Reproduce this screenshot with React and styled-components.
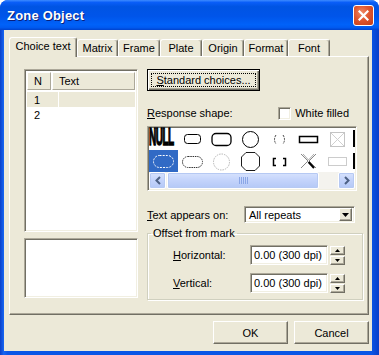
import React from "react"
import styled, { createGlobalStyle } from "styled-components"

const GlobalStyle = createGlobalStyle`
  html, body { margin: 0; padding: 0; background: #fff; }
  body {
    font-family: "Liberation Sans", Arial, sans-serif;
    font-size: 11px;
    color: #000;
  }
`

const Window = styled.div`
  width: 379px;
  height: 355px;
  display: flex;
  flex-direction: column;
  border-radius: 8px 8px 0 0;
  overflow: hidden;
  background: #0851e0;
`

const TitleBar = styled.div`
  height: 30px;
  flex: none;
  display: flex;
  align-items: center;
  justify-content: space-between;
  padding: 0 5px 0 7px;
  background: linear-gradient(180deg, #3d8bff 0%, #0a5ef8 8%, #0054e3 22%, #0055ea 55%, #0062f9 82%, #005af0 92%, #0042cc 100%);
`

const Title = styled.span`
  font-family: "Liberation Sans", Arial, sans-serif;
  font-weight: bold;
  font-size: 13px;
  color: #fff;
  text-shadow: 1px 1px 0 #0a1f7a;
  letter-spacing: 0.2px;
`

const CloseButton = styled.div`
  width: 19px;
  height: 19px;
  border: 1px solid #fff;
  border-radius: 3px;
  display: flex;
  align-items: center;
  justify-content: center;
  background: radial-gradient(circle at 40% 35%, #f08a66 0%, #e0562f 45%, #c43d16 100%);
`

const Frame = styled.div`
  flex: 1;
  display: flex;
  padding: 0 7px 4px 4px;
  background: linear-gradient(90deg, #0a3fc8 0%, #1665f2 1%, #0a55e6 2%, #0a55e6 98%, #0a3fc8 100%);
`

const Body = styled.div`
  flex: 1;
  display: flex;
  flex-direction: column;
  background: #ece9d8;
  padding: 7px 3px 0 5px;
`

const TabRow = styled.div`
  height: 19px;
  display: flex;
  align-items: flex-end;
  position: relative;
  z-index: 1;
`

const Tab = styled.div`
  box-sizing: border-box;
  width: ${p => p.$width}px;
  height: ${p => (p.$active ? 20 : 17)}px;
  margin-bottom: ${p => (p.$active ? -1 : 0)}px;
  background: #ece9d8;
  border-top: 1px solid #fff;
  border-left: 1px solid #fff;
  border-right: 1px solid #716f64;
  box-shadow: inset -1px 0 #aca899;
  border-radius: 3px 3px 0 0;
  display: flex;
  justify-content: center;
  padding-top: 2px;
  line-height: 13px;
`

const Panel = styled.div`
  box-sizing: border-box;
  height: 259px;
  display: flex;
  gap: 9px;
  padding: 12px 5px 0 14px;
  border: 1px solid;
  border-color: #fff #716f64 #716f64 #fff;
  box-shadow: inset -1px -1px #aca899;
`

const LeftCol = styled.div`
  width: 114px;
  display: flex;
  flex-direction: column;
  gap: 6px;
`

const Sunken = styled.div`
  box-sizing: border-box;
  height: ${p => p.$h}px;
  background: #fff;
  border: 1px solid;
  border-color: #aca899 #fff #fff #aca899;
  box-shadow: inset 1px 1px #716f64, inset -1px -1px #f1efe2;
  padding: 2px;
  overflow: hidden;
`

const ListRow = styled.div`
  display: flex;
  gap: 1px;
  height: ${p => (p.$head ? 18 : 15)}px;
  margin-bottom: ${p => (p.$head ? 2 : 0)}px;
`

const HeadCell = styled.div`
  box-sizing: border-box;
  width: ${p => (p.$w ? `${p.$w}px` : "auto")};
  flex: ${p => (p.$w ? "none" : 1)};
  background: #ece9d8;
  border: 1px solid;
  border-color: #fff #aca899 #aca899 #fff;
  padding-left: ${p => p.$pad}px;
  display: flex;
  align-items: center;
`

const Cell = styled.div`
  width: ${p => (p.$w ? `${p.$w}px` : "auto")};
  flex: ${p => (p.$w ? "none" : 1)};
  background: ${p => (p.$hl ? "#ece9d8" : "#fff")};
  padding-left: ${p => p.$pad}px;
  display: flex;
  align-items: center;
`

const RightCol = styled.div`
  flex: 1;
  display: flex;
  flex-direction: column;
`

const DefaultButton = styled.div`
  box-sizing: border-box;
  width: 113px;
  height: 22px;
  border: 1px solid #000;
  box-shadow: inset 1px 1px #fff, inset -1px -1px #716f64, inset -2px -2px #aca899;
  display: flex;
  padding: 3px;
`

const FocusRing = styled.div`
  flex: 1;
  border: 1px dotted #000;
  display: flex;
  align-items: center;
  justify-content: center;
`

const U = styled.span`
  text-decoration: underline;
`

const ShapeHeader = styled.div`
  display: flex;
  align-items: center;
  justify-content: space-between;
  height: 14px;
  margin-top: 15px;
  padding-right: 14px;
`

const CheckLabel = styled.label`
  display: flex;
  align-items: center;
  gap: 4px;
`

const CheckBox = styled.span`
  box-sizing: border-box;
  width: 13px;
  height: 13px;
  background: #fff;
  border: 1px solid;
  border-color: #aca899 #fff #fff #aca899;
  box-shadow: inset 1px 1px #716f64, inset -1px -1px #f1efe2;
`

const ShapeBox = styled.div`
  box-sizing: border-box;
  width: 210px;
  height: 65px;
  margin-top: 6px;
  background: #fff;
  border: 1px solid;
  border-color: #aca899 #fff #fff #aca899;
  box-shadow: inset 1px 1px #716f64, inset -1px -1px #f1efe2;
  padding: 1px;
  display: flex;
  flex-direction: column;
`

const ShapeGrid = styled.div`
  display: grid;
  grid-template-columns: repeat(7, 29px) 3px;
  grid-auto-rows: 22px;
  width: 206px;
`

const ShapeCell = styled.div`
  display: flex;
  align-items: center;
  justify-content: ${p => (p.$start ? "flex-start" : "center")};
  background: ${p => (p.$selected ? "#316ac5" : "transparent")};
`

const CutEdge = styled.div`
  width: 2px;
  height: ${p => p.$h}px;
  margin-top: ${p => p.$top}px;
  align-self: flex-start;
  background: #000;
`

const NullText = styled.span`
  display: block;
  font-family: "Liberation Sans", Arial, sans-serif;
  font-weight: bold;
  font-size: 10px;
  line-height: 10px;
  letter-spacing: -0.5px;
  white-space: nowrap;
  -webkit-text-stroke: 0.6px #000;
  transform: scaleY(2.3);
  margin-top: -2px;
`

const ScrollBar = styled.div`
  height: 17px;
  display: flex;
  background: #f4f3ee;
`

const ScrollBtn = styled.div`
  box-sizing: border-box;
  width: ${p => p.$w}px;
  margin-left: ${p => p.$ml || 0}px;
  border: 1px solid #fff;
  border-radius: 2px;
  background: linear-gradient(180deg, #d6e2fd 0%, #c3d3fb 50%, #b4c8f6 100%);
  box-shadow: inset 0 0 0 1px #b6c9f3;
  display: flex;
  align-items: center;
  justify-content: center;
`

const ScrollGap = styled.div`
  flex: 1;
`

const SelectRow = styled.div`
  display: flex;
  align-items: center;
  justify-content: space-between;
  margin-top: 15px;
  padding-right: 8px;
`

const Select = styled.div`
  box-sizing: border-box;
  width: 111px;
  height: 17px;
  background: #fff;
  border: 1px solid;
  border-color: #aca899 #fff #fff #aca899;
  box-shadow: inset 1px 1px #716f64, inset -1px -1px #f1efe2;
  display: flex;
  align-items: center;
  padding: 2px 2px 2px 4px;
`

const SelectValue = styled.span`
  flex: 1;
`

const Raised = styled.div`
  box-sizing: border-box;
  width: ${p => p.$w}px;
  height: ${p => p.$h}px;
  background: #ece9d8;
  border: 1px solid;
  border-color: #fff #716f64 #716f64 #fff;
  box-shadow: inset -1px -1px #aca899;
  display: flex;
  align-items: center;
  justify-content: center;
  flex: none;
`

const Group = styled.fieldset`
  margin: 4px 0 0 0;
  padding: 5px 0 6px 3px;
  border: 1px solid #d0d0bf;
  box-shadow: 1px 1px 0 #fff, inset 1px 1px 0 #fff;
  border-radius: 0;
  display: flex;
  flex-direction: column;
  gap: 8px;
`

const Legend = styled.legend`
  padding: 0 2px;
  margin-left: 0;
  line-height: 13px;
`

const FieldRow = styled.div`
  display: flex;
  align-items: center;
  padding-left: 22px;
`

const FieldLabel = styled.span`
  width: 77px;
`

const Input = styled.div`
  box-sizing: border-box;
  width: 78px;
  height: 20px;
  background: #fff;
  border: 1px solid;
  border-color: #aca899 #fff #fff #aca899;
  box-shadow: inset 1px 1px #716f64, inset -1px -1px #f1efe2;
  padding-left: 3px;
  display: flex;
  align-items: center;
`

const Spin = styled.div`
  display: flex;
  flex-direction: column;
  gap: 1px;
  margin-left: 2px;
`

const Footer = styled.div`
  display: flex;
  justify-content: flex-end;
  gap: 6px;
  margin-top: 6px;
`

const Tri = ({ dir, size = 5, color = "#000" }) => {
  const h = Math.ceil(size / 2)
  const pts = {
    down: `0,0 ${size},0 ${size / 2},${h}`,
    up: `0,${h} ${size},${h} ${size / 2},0`,
  }[dir]
  return (
    <svg width={size} height={h} viewBox={`0 0 ${size} ${h}`}>
      <polygon points={pts} fill={color} />
    </svg>
  )
}

const Chevron = ({ dir }) => (
  <svg width="8" height="9" viewBox="0 0 8 9">
    <path d={dir === "left" ? "M6 1 L2.5 4.5 L6 8" : "M2 1 L5.5 4.5 L2 8"} stroke="#4d6185" strokeWidth="2" fill="none" />
  </svg>
)

const S = ({ children }) => (
  <svg width="29" height="22" viewBox="0 0 29 22" fill="none">{children}</svg>
)

const shapes = [
  <NullText>NULL</NullText>,
  <S><rect x="6.5" y="6.5" width="16" height="9" rx="3" stroke="#000" /></S>,
  <S><rect x="5" y="5.5" width="19" height="12" rx="4" stroke="#000" strokeWidth="1.3" /></S>,
  <S><circle cx="14.5" cy="11.5" r="8" stroke="#000" /></S>,
  <S>
    <path d="M11 7 Q8 11.5 11 16" stroke="#444" strokeDasharray="2 1" />
    <path d="M18 7 Q21 11.5 18 16" stroke="#444" strokeDasharray="2 1" />
  </S>,
  <S><rect x="5.5" y="8.5" width="18" height="6" stroke="#000" strokeWidth="1.5" /></S>,
  <S>
    <rect x="7.5" y="4.5" width="14" height="14" stroke="#c4c4c4" />
    <path d="M8 5 L21 18 M21 5 L8 18" stroke="#d0d0d0" />
  </S>,
  <CutEdge $h={17} $top={2} />,
  <S><rect x="4.5" y="5.5" width="20" height="12" rx="6" stroke="#fff" strokeDasharray="2 1.2" /></S>,
  <S><rect x="4.5" y="6.5" width="20" height="11" rx="5.5" stroke="#333" strokeDasharray="1.5 0.8" /></S>,
  <S><circle cx="14.5" cy="12" r="8" stroke="#b4b4b4" strokeDasharray="1.5 1" /></S>,
  <S><polygon points="10,2.5 19,2.5 23.5,7 23.5,16 19,20.5 10,20.5 5.5,16 5.5,7" stroke="#000" strokeWidth="0.9" /></S>,
  <S>
    <path d="M11 8.5 H8.5 V15.5 H11" stroke="#000" strokeWidth="1.5" />
    <path d="M18 8.5 H20.5 V15.5 H18" stroke="#000" strokeWidth="1.5" />
  </S>,
  <S>
    <path d="M7 4 L14 11 L7 18 M22 4 L15 11 L22 18" stroke="#888" />
    <path d="M9 4 L14.5 10 M20 4 L14.5 10" stroke="#aaa" />
    <path d="M14.5 12 L20 18" stroke="#000" strokeWidth="2" />
  </S>,
  <S><rect x="5.5" y="7.5" width="18" height="8" stroke="#999" strokeDasharray="1 1" /></S>,
  <CutEdge $h={16} $top={3} />,
]

const tabs = [
  ["Choice text", 68],
  ["Matrix", 41],
  ["Frame", 42],
  ["Plate", 42],
  ["Origin", 42],
  ["Format", 44],
  ["Font", 42],
]

function SpinButtons() {
  return (
    <Spin>
      <Raised $w={15} $h={9}><Tri dir="up" /></Raised>
      <Raised $w={15} $h={9}><Tri dir="down" /></Raised>
    </Spin>
  )
}

export default function App() {
  return (
    <>
      <GlobalStyle />
      <Window>
        <TitleBar>
          <Title>Zone Object</Title>
          <CloseButton>
            <svg width="11" height="11" viewBox="0 0 11 11">
              <path d="M1.5 1.5 L9.5 9.5 M9.5 1.5 L1.5 9.5" stroke="#fff" strokeWidth="2.2" strokeLinecap="square" />
            </svg>
          </CloseButton>
        </TitleBar>
        <Frame>
          <Body>
            <TabRow>
              {tabs.map(([label, w], i) => (
                <Tab key={label} $width={w} $active={i === 0}>{label}</Tab>
              ))}
            </TabRow>
            <Panel>
              <LeftCol>
                <Sunken $h={163}>
                  <ListRow $head>
                    <HeadCell $w={24} $pad={6}>N</HeadCell>
                    <HeadCell $pad={6}>Text</HeadCell>
                  </ListRow>
                  <ListRow>
                    <Cell $w={24} $hl $pad={7}>1</Cell>
                    <Cell $hl $pad={6}></Cell>
                  </ListRow>
                  <ListRow>
                    <Cell $w={24} $pad={7}>2</Cell>
                    <Cell $pad={6}></Cell>
                  </ListRow>
                </Sunken>
                <Sunken $h={60} />
              </LeftCol>
              <RightCol>
                <DefaultButton>
                  <FocusRing><span><U>S</U>tandard choices...</span></FocusRing>
                </DefaultButton>
                <ShapeHeader>
                  <span><U>R</U>esponse shape:</span>
                  <CheckLabel><CheckBox />White filled</CheckLabel>
                </ShapeHeader>
                <ShapeBox>
                  <ShapeGrid>
                    {shapes.map((s, i) => (
                      <ShapeCell key={i} $selected={i === 8} $start={i === 0}>{s}</ShapeCell>
                    ))}
                  </ShapeGrid>
                  <ScrollBar>
                    <ScrollBtn $w={17}><Chevron dir="left" /></ScrollBtn>
                    <ScrollBtn $w={152} $ml={1}>
                      <svg width="9" height="7" viewBox="0 0 9 7">
                        {[0.5, 2.5, 4.5, 6.5, 8.5].map(x => (
                          <path key={x} d={`M${x} 0 V7`} stroke="#8aa6e6" />
                        ))}
                      </svg>
                    </ScrollBtn>
                    <ScrollGap />
                    <ScrollBtn $w={17}><Chevron dir="right" /></ScrollBtn>
                  </ScrollBar>
                </ShapeBox>
                <SelectRow>
                  <span><U>T</U>ext appears on:</span>
                  <Select>
                    <SelectValue>All repeats</SelectValue>
                    <Raised $w={13} $h={13}><Tri dir="down" size={7} /></Raised>
                  </Select>
                </SelectRow>
                <Group>
                  <Legend>Offset from mark</Legend>
                  <FieldRow>
                    <FieldLabel><U>H</U>orizontal:</FieldLabel>
                    <Input>0.00 (300 dpi)</Input>
                    <SpinButtons />
                  </FieldRow>
                  <FieldRow>
                    <FieldLabel><U>V</U>ertical:</FieldLabel>
                    <Input>0.00 (300 dpi)</Input>
                    <SpinButtons />
                  </FieldRow>
                </Group>
              </RightCol>
            </Panel>
            <Footer>
              <Raised $w={75} $h={23}>OK</Raised>
              <Raised $w={75} $h={23}>Cancel</Raised>
            </Footer>
          </Body>
        </Frame>
      </Window>
    </>
  )
}
